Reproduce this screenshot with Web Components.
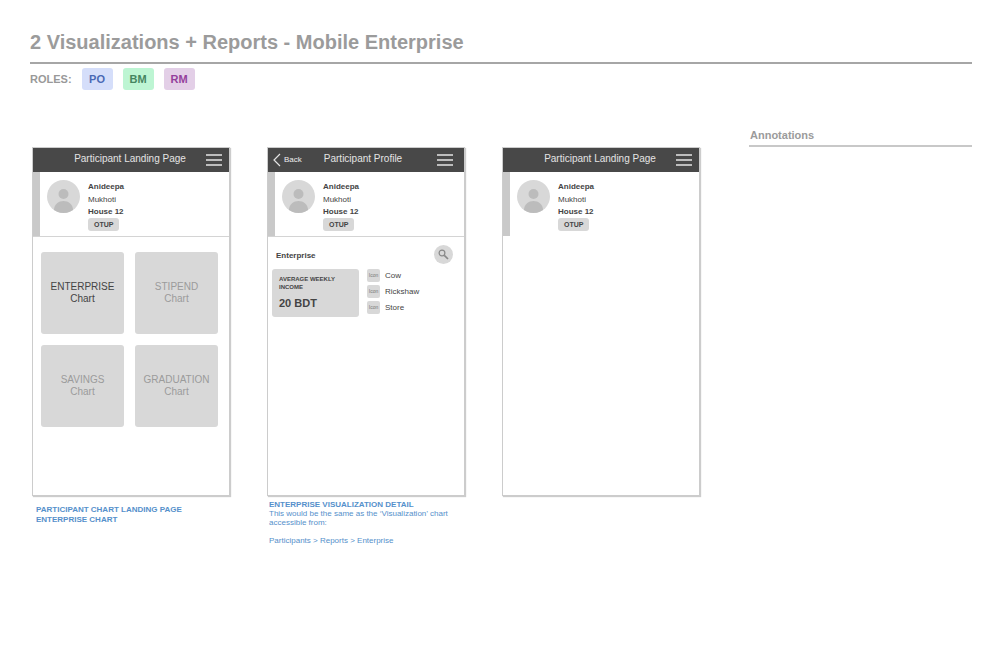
<!DOCTYPE html>
<html lang="en">
<head>
<meta charset="utf-8">
<meta name="viewport" content="width=device-width, initial-scale=1">
<title>2 Visualizations + Reports - Mobile Enterprise</title>
<style>
  body { margin: 0; background: #fff; font-family: "Liberation Sans", Arial, sans-serif; color: #444; }
</style>
</head>
<body>
<wire-sheet>
  <span slot="title">2 Visualizations + Reports - Mobile Enterprise</span>
  <role-badge slot="roles" kind="po">PO</role-badge>
  <role-badge slot="roles" kind="bm">BM</role-badge>
  <role-badge slot="roles" kind="rm">RM</role-badge>

  <screen-figure>
    <phone-screen>
      <screen-bar slot="bar">Participant Landing Page</screen-bar>
      <profile-card divided></profile-card>
      <tile-grid>
        <chart-tile active>ENTERPRISE</chart-tile>
        <chart-tile>STIPEND</chart-tile>
        <chart-tile>SAVINGS</chart-tile>
        <chart-tile>GRADUATION</chart-tile>
      </tile-grid>
    </phone-screen>
    <screen-note slot="note" spaced>
      <span slot="heading">PARTICIPANT CHART LANDING PAGE<br>ENTERPRISE CHART</span>
    </screen-note>
  </screen-figure>

  <screen-figure>
    <phone-screen>
      <screen-bar slot="bar" back>Participant Profile</screen-bar>
      <profile-card divided></profile-card>
      <enterprise-panel></enterprise-panel>
    </phone-screen>
    <screen-note slot="note">
      <span slot="heading">ENTERPRISE VISUALIZATION DETAIL</span>
      This would be the same as the ‘Visualization’ chart accessible from:<br><br>Participants &gt; Reports &gt; Enterprise
    </screen-note>
  </screen-figure>

  <screen-figure>
    <phone-screen>
      <screen-bar slot="bar">Participant Landing Page</screen-bar>
      <profile-card></profile-card>
    </phone-screen>
  </screen-figure>

  <annotation-column>Annotations</annotation-column>
</wire-sheet>

<script>
function element(name, html) {
  const template = document.createElement('template');
  template.innerHTML = html;
  customElements.define(name, class extends HTMLElement {
    constructor() {
      super();
      this.attachShadow({ mode: 'open' }).append(template.content.cloneNode(true));
    }
  });
}

element('wire-sheet', `
  <style>
    :host { display: block; padding: 30px 28px 30px 30px; }
    h1 { margin: 0; padding-bottom: 8px; border-bottom: 2px solid #a6a6a6; font-size: 20px; line-height: 24px; color: #9b9b9b; }
    .roles { display: flex; align-items: center; gap: 10px; margin-top: 4px; font-size: 11px; font-weight: bold; color: #999; }
    .board { display: grid; grid-template-columns: repeat(3, minmax(198px, 198fr)) minmax(0, 235fr); column-gap: 37px; align-items: start; margin: 57px 0 0 2px; }
  </style>
  <header>
    <h1><slot name="title"></slot></h1>
    <div class="roles"><span>ROLES:</span><slot name="roles"></slot></div>
  </header>
  <main class="board"><slot></slot></main>`);

element('role-badge', `
  <style>
    :host { display: block; width: 31px; border-radius: 3px; font-size: 11px; font-weight: bold; line-height: 22px; text-align: center; }
    :host([kind=po]) { background: #d5defa; color: #4a69b4; }
    :host([kind=bm]) { background: #bdf5d3; color: #458561; }
    :host([kind=rm]) { background: #e3cfe7; color: #943f9c; }
  </style>
  <slot></slot>`);

element('screen-figure', `
  <style>
    :host { display: block; }
    figure { margin: 0; }
  </style>
  <figure><slot></slot><figcaption><slot name="note"></slot></figcaption></figure>`);

element('phone-screen', `
  <style>
    :host { display: block; box-sizing: border-box; min-height: 349px; border: 1px solid #ccc; background: #fff; box-shadow: 1px 1px 1px #ccc; }
  </style>
  <slot name="bar"></slot><slot></slot>`);

element('screen-bar', `
  <style>
    :host { display: grid; grid-template-columns: 1fr auto 1fr; align-items: center; height: 24px; padding: 0 7px 0 5px; background: #484848; color: #e4e4e4; font-size: 10px; }
    :host([back]) { padding-right: 11px; }
    a { display: none; align-items: center; gap: 3px; color: #eee; font-size: 8px; line-height: 12px; text-decoration: none; }
    :host([back]) a { display: flex; }
    button { grid-column: 3; justify-self: end; display: block; padding: 0; border: 0; background: none; }
    .title { grid-column: 2; line-height: 12px; padding-bottom: 2px; }
    svg { display: block; fill: none; stroke: #e4e4e4; }
  </style>
  <a href="#back"><svg width="8" height="14" viewBox="0 0 8 14"><path d="M7 1 1 7 7 13" stroke-width="1.200"/></svg>Back</a>
  <span class="title"><slot></slot></span>
  <button type="button" aria-label="Menu"><svg width="16" height="14" viewBox="0 0 16 14"><path d="M0 2H16M0 7H16M0 12H16" stroke-width="1.600"/></svg></button>`);

element('profile-card', `
  <style>
    :host { display: flex; align-items: flex-start; box-sizing: border-box; height: 65px; font-size: 8px; color: #444; border-bottom: 1px solid transparent; }
    :host([divided]) { border-bottom-color: #d4d4d4; }
    .stripe { align-self: stretch; width: 7px; background: #c9c9c9; }
    .avatar { margin: 8px 8px 0 7px; }
    .lines { display: grid; justify-items: start; padding-top: 8px; line-height: 13px; }
    .name { font-weight: bold; }
    .house { font-weight: bold; line-height: 12px; }
    .tag { padding: 0 6px; border-radius: 3px; background: #d8d8d8; font-size: 7px; font-weight: bold; }
    svg { display: block; }
  </style>
  <div class="stripe"></div>
  <svg class="avatar" width="33" height="33" viewBox="0 0 33 33" role="img" aria-label="Participant">
    <defs><clipPath id="disc"><circle cx="16.500" cy="16.500" r="16.500"/></clipPath></defs>
    <circle cx="16.500" cy="16.500" r="16.500" fill="#d8d8d8"/>
    <g clip-path="url(#disc)" fill="#bcbcbc"><circle cx="16.500" cy="14" r="5"/><path d="M7 34v-4.500C7.500 24 11.500 21 16.500 21S25.500 24 26 29.500V34z"/></g>
  </svg>
  <div class="lines">
    <span class="name">Anideepa</span>
    <span>Mukhoti</span>
    <span class="house">House 12</span>
    <span class="tag">OTUP</span>
  </div>`);

element('tile-grid', `
  <style>
    :host { display: grid; grid-template-columns: 1fr 1fr; gap: 11px; padding: 15px 11px 0 8px; }
  </style>
  <slot></slot>`);

element('chart-tile', `
  <style>
    :host { display: block; }
    button { width: 100%; height: 82px; padding: 0; border: 0; border-radius: 3px; background: #d8d8d8; color: #9b9b9b; font: 10px/12px "Liberation Sans", Arial, sans-serif; }
    :host([active]) button { color: #444; }
  </style>
  <button type="button"><slot></slot><br>Chart</button>`);

element('enterprise-panel', `
  <style>
    :host { display: block; padding: 8px 11px 0 4px; font-size: 8px; color: #444; }
    .head { display: flex; align-items: center; justify-content: space-between; padding-left: 4px; }
    h2 { margin: 0; padding-top: 2px; font-size: 8px; line-height: 9px; }
    button { display: grid; place-items: center; width: 19px; height: 19px; padding: 0; border: 0; border-radius: 50%; background: #d8d8d8; }
    .body { display: flex; gap: 8px; margin-top: 5px; }
    .stat { box-sizing: border-box; width: 87px; height: 48px; padding: 6px 7px 0; border-radius: 3px; background: #d8d8d8; font-size: 6px; font-weight: bold; line-height: 8px; }
    .stat p { margin: 0; }
    .stat .value { margin-top: 5px; font-size: 11px; line-height: 14px; }
    ul { display: grid; align-content: start; gap: 3px; margin: 0; padding: 0; list-style: none; line-height: 13px; }
    li { display: flex; gap: 5px; }
    i { width: 13px; height: 13px; border-radius: 2px; background: #d8d8d8; color: #777; font-size: 5px; font-style: normal; text-align: center; }
  </style>
  <div class="head">
    <h2>Enterprise</h2>
    <button type="button" aria-label="Search"><svg width="11" height="11" viewBox="0 0 11 11" fill="none" stroke="#888"><circle cx="4" cy="4" r="2.900" stroke-width="1.200"/><path d="M6.300 6.300 10 10" stroke-width="1.700"/></svg></button>
  </div>
  <div class="body">
    <div class="stat"><p>AVERAGE WEEKLY INCOME</p><p class="value">20 BDT</p></div>
    <ul><li><i>Icon</i>Cow</li><li><i>Icon</i>Rickshaw</li><li><i>Icon</i>Store</li></ul>
  </div>`);

element('screen-note', `
  <style>
    :host { display: block; padding: 4px 8px 0 2px; font-size: 8px; line-height: 9px; color: #5590cb; }
    :host([spaced]) { padding: 9px 0 0 4px; line-height: 10px; }
    .heading { display: block; font-weight: bold; }
  </style>
  <span class="heading"><slot name="heading"></slot></span><slot></slot>`);

element('annotation-column', `
  <style>
    :host { display: block; margin: -19px 0 0 12px; }
    h2 { margin: 0; padding: 0 1px 2px; border-bottom: 2px solid #c8c8c8; font-size: 11px; line-height: 15px; color: #9b9b9b; }
  </style>
  <h2><slot></slot></h2>`);
</script>
</body>
</html>
